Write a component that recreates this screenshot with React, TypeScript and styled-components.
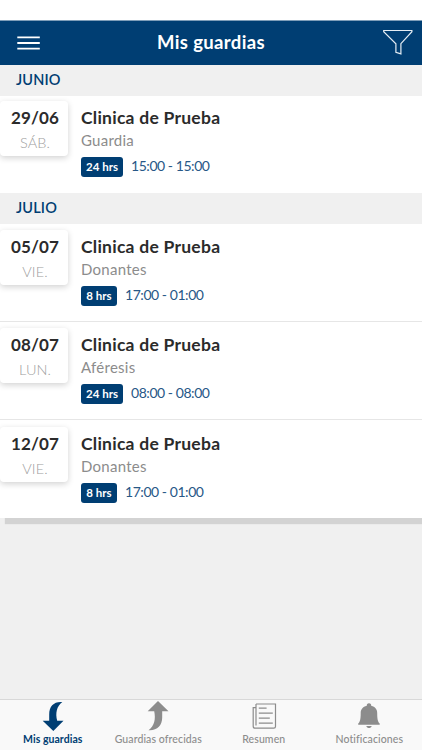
import React from "react";
import styled, { createGlobalStyle } from "styled-components";

const navy = "#003e73";

const GlobalStyle = createGlobalStyle`
  * { box-sizing: border-box; }
  body { margin: 0; background: #f0f0f0; font-family: Lato, "Open Sans", sans-serif; }
`;

const Screen = styled.div`
  width: 422px;
  height: 750px;
  display: flex;
  flex-direction: column;
  overflow: hidden;
  background: #f0f0f0;
`;
const StatusBar = styled.div`
  height: 21px;
  flex: none;
  background: #fff;
  border-bottom: 1px solid #7f9eb9;
`;
const Header = styled.header`
  height: 44px;
  flex: none;
  display: grid;
  grid-template-columns: 60px 1fr 60px;
  align-items: center;
  background: ${navy};
`;
const IconButton = styled.button<{ $end?: boolean }>`
  height: 44px;
  display: flex;
  align-items: center;
  justify-content: ${(p) => (p.$end ? "flex-end" : "flex-start")};
  padding: ${(p) => (p.$end ? "0 9px 2px 0" : "0 0 1px 17px")};
  border: 0;
  background: none;
`;
const Title = styled.h1`
  margin: 0;
  text-align: center;
  color: #fff;
  font-size: 18.5px;
  line-height: 40px;
  padding-bottom: 2px;
  font-weight: 700;
  letter-spacing: 0.35px;
`;
const Content = styled.main`
  flex: 1;
`;
const List = styled.div`
  background: #fff;
  box-shadow: 5px 6px 1px #d3d3d3;
`;
const Month = styled.h2`
  height: 31px;
  margin: 0;
  padding: 0 0 0 16px;
  background: #f0f0f0;
  color: ${navy};
  font-size: 14.5px;
  line-height: 30px;
  font-weight: 600;
  letter-spacing: 0.15px;
`;
const Row = styled.article<{ $height: number; $inset: number }>`
  height: ${(p) => p.$height}px;
  display: flex;
  align-items: flex-start;
  padding-top: ${(p) => p.$inset}px;
  border-bottom: 1px solid #e6e6e6;
  &:last-child { border-bottom-color: #fff; }
`;
const DateCard = styled.div`
  width: 68px;
  height: 55px;
  padding: 4px 0 0 2px;
  border-radius: 4px;
  background: #fff;
  box-shadow: 0 2px 6px rgba(0, 0, 0, 0.18);
  text-align: center;
`;
const Day = styled.div`
  color: #2b2b2b;
  font-size: 17px;
  line-height: 26px;
  font-weight: 700;
  letter-spacing: 0.15px;
`;
const Weekday = styled.div`
  color: #a0a0a0;
  font-size: 14.5px;
  line-height: 23px;
  font-weight: 300;
  letter-spacing: 0.1px;
`;
const Details = styled.div`
  padding: 4px 0 0 13px;
`;
const Place = styled.h3`
  margin: 0;
  color: #2b2b2b;
  font-size: 17.5px;
  line-height: 25px;
  font-weight: 700;
  letter-spacing: 0.25px;
`;
const Service = styled.div`
  color: #8c8c8c;
  font-size: 15px;
  line-height: 21px;
  font-weight: 400;
  letter-spacing: 0.25px;
`;
const Schedule = styled.div`
  display: flex;
  align-items: center;
  gap: 8px;
  margin-top: 6px;
`;
const Badge = styled.span<{ $long: boolean }>`
  width: ${(p) => (p.$long ? 42 : 36)}px;
  height: 20px;
  border-radius: 3px;
  background: ${navy};
  color: #fff;
  font-size: 11.5px;
  line-height: 19px;
  font-weight: 700;
  text-align: center;
`;
const Hours = styled.span`
  color: #285887;
  font-size: 14px;
  line-height: 18px;
  letter-spacing: -0.45px;
  margin-bottom: 2px;
`;
const TabBar = styled.nav`
  height: 51px;
  flex: none;
  display: grid;
  grid-template-columns: repeat(4, 1fr);
  border-top: 1px solid #d8d8d8;
  background: #f9f9f9;
`;
const Tab = styled.a<{ $active?: boolean }>`
  display: flex;
  flex-direction: column;
  align-items: center;
  color: ${(p) => (p.$active ? navy : "#8c8c8c")};
  font-size: 10.5px;
  line-height: 14px;
  font-weight: ${(p) => (p.$active ? 700 : 500)};
  letter-spacing: ${(p) => (p.$active ? 0.05 : 0.1)}px;
  white-space: nowrap;
`;
const TabIcon = styled.svg`
  width: 32px;
  height: 32px;
  display: block;
`;

const MenuIcon = () => (
  <svg width="24" height="14" viewBox="0 0 24 14" stroke="#fff" strokeWidth="1.8">
    <path d="M.3 1.3h22.5M.3 7h22.5M.3 12.6h22.5" />
  </svg>
);
const FilterIcon = () => (
  <svg width="32" height="28" viewBox="0 0 32 28" fill="none" stroke="#e5edf4" strokeWidth="1.2">
    <path d="M2.7 2.5h28.2v1.2L19.9 15.7v10.2l-5-1.7v-8.5L2.7 3.7z" />
  </svg>
);
const DownIcon = () => (
  <TabIcon viewBox="0 0 32 32" fill="currentColor">
    <path d="M25.3 2C17 1.3 12.2 6 12.2 14.5V20.8H5.7L16.3 31 26.5 20.8H20.2C18.2 13.5 19.6 6.2 25.3 2Z" />
  </TabIcon>
);
const UpIcon = () => (
  <TabIcon viewBox="0 0 32 32" fill="currentColor">
    <path d="M6.5 30.2C14.8 30.9 20.2 25.6 20.2 17.5V11.3H26.5L16 1 5.7 11.3H12.2C13.8 18.8 12.6 26 6.5 30.2Z" />
  </TabIcon>
);
const NewsIcon = () => (
  <TabIcon viewBox="0 0 32 32" fill="none" stroke="currentColor" strokeWidth="1.2">
    <path d="M8 4h19.5v22.5q0 1.7-1.7 1.7H7.1q-1.9 0-1.9-2V7.7H8M8 4v21.5M10.8 8.2h7.8M10.8 13.2h14M10.8 18.2h11M10.8 23.2h14" />
  </TabIcon>
);
const BellIcon = () => (
  <TabIcon viewBox="0 0 32 32" fill="currentColor">
    <path d="M16 3.3c-1.5 0-2.4 1-2.2 2.4C9.7 6.5 7.7 9.4 7.7 13.2c0 6.2-.8 9-2.5 10.3v1.2h21.5v-1.2c-1.7-1.3-2.5-4.1-2.5-10.3 0-3.8-2-6.7-6-7.5.2-1.4-.7-2.4-2.2-2.4ZM13.3 26h5.4c-.5 1.4-1.4 2.1-2.7 2.1s-2.2-.7-2.7-2.1Z" />
  </TabIcon>
);

type Shift = {
  date: string;
  day: string;
  service: string;
  hrs: string;
  time: string;
  height: number;
  inset: number;
};

const months: { name: string; shifts: Shift[] }[] = [
  {
    name: "JUNIO",
    shifts: [{ date: "29/06", day: "SÁB.", service: "Guardia", hrs: "24 hrs", time: "15:00 - 15:00", height: 97, inset: 5 }],
  },
  {
    name: "JULIO",
    shifts: [
      { date: "05/07", day: "VIE.", service: "Donantes", hrs: "8 hrs", time: "17:00 - 01:00", height: 98, inset: 6 },
      { date: "08/07", day: "LUN.", service: "Aféresis", hrs: "24 hrs", time: "08:00 - 08:00", height: 98, inset: 6 },
      { date: "12/07", day: "VIE.", service: "Donantes", hrs: "8 hrs", time: "17:00 - 01:00", height: 98, inset: 7 },
    ],
  },
];

const ShiftRow = ({ shift }: { shift: Shift }) => (
  <Row $height={shift.height} $inset={shift.inset}>
    <DateCard>
      <Day>{shift.date}</Day>
      <Weekday>{shift.day}</Weekday>
    </DateCard>
    <Details>
      <Place>Clinica de Prueba</Place>
      <Service>{shift.service}</Service>
      <Schedule>
        <Badge $long={shift.hrs.length > 5}>{shift.hrs}</Badge>
        <Hours>{shift.time}</Hours>
      </Schedule>
    </Details>
  </Row>
);

export default function App() {
  return (
    <Screen>
      <GlobalStyle />
      <StatusBar />
      <Header>
        <IconButton aria-label="Menú"><MenuIcon /></IconButton>
        <Title>Mis guardias</Title>
        <IconButton $end aria-label="Filtrar"><FilterIcon /></IconButton>
      </Header>
      <Content>
        <List>
          {months.map((month) => (
            <section key={month.name}>
              <Month>{month.name}</Month>
              {month.shifts.map((shift) => <ShiftRow key={shift.date} shift={shift} />)}
            </section>
          ))}
        </List>
      </Content>
      <TabBar>
        <Tab $active><DownIcon />Mis guardias</Tab>
        <Tab><UpIcon />Guardias ofrecidas</Tab>
        <Tab><NewsIcon />Resumen</Tab>
        <Tab><BellIcon />Notificaciones</Tab>
      </TabBar>
    </Screen>
  );
}
